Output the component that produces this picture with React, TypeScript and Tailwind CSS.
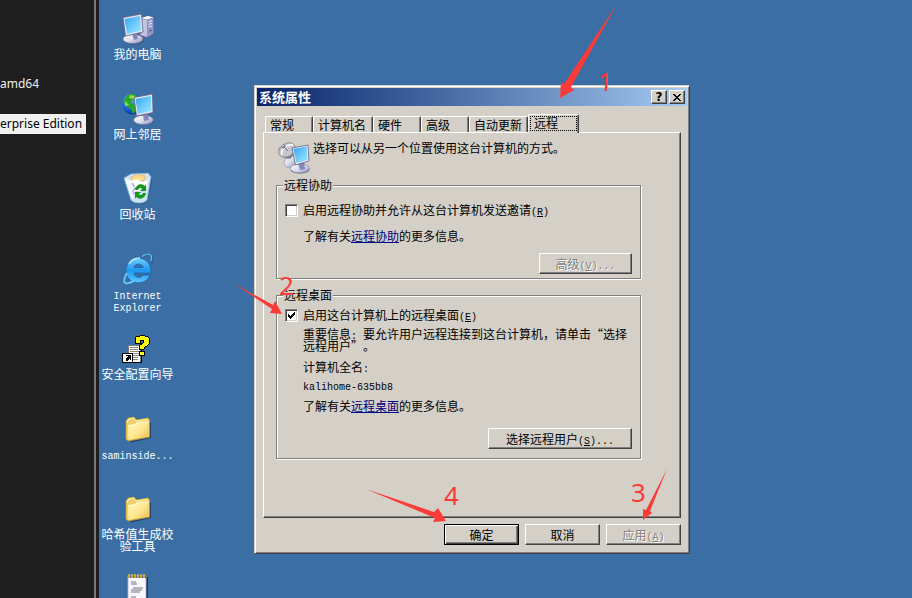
import { useState, type ReactNode } from "react";

const EDGE = "border border-t-white border-l-white border-r-[#404040] border-b-[#404040] shadow-[inset_-1px_-1px_0_#808080]";
const DISABLED = "disabled:text-[#808080] disabled:[text-shadow:1px_1px_0_#fff]";

const TABS = [
  { label: "常规", width: "w-12" },
  { label: "计算机名", width: "w-[60px]" },
  { label: "硬件", width: "w-12" },
  { label: "高级", width: "w-12" },
  { label: "自动更新", width: "w-[59px]" },
  { label: "远程", width: "w-[51px]" },
];

function Mono({ children }: { children: ReactNode }) {
  return <span className="whitespace-pre font-['Liberation_Mono',monospace] text-[10px] leading-[6px]">{children}</span>;
}

function Key({ letter }: { letter: string }) {
  return (
    <Mono>
      (<u>{letter}</u>)
    </Mono>
  );
}

function ScreenGradients() {
  return (
    <svg className="absolute size-0" aria-hidden="true">
      <defs>
        <linearGradient id="glass" x1="0" y1="0" x2="1" y2="1">
          <stop offset="0" stopColor="#2fa4f4" />
          <stop offset="0.5" stopColor="#6cc9fb" />
          <stop offset="1" stopColor="#9fe6ff" />
        </linearGradient>
        <linearGradient id="metal" x1="0" y1="0" x2="1" y2="1">
          <stop offset="0" stopColor="#ffffff" />
          <stop offset="0.5" stopColor="#dcdcea" />
          <stop offset="1" stopColor="#8484b4" />
        </linearGradient>
        <linearGradient id="paper" x1="0" y1="0" x2="1" y2="1">
          <stop offset="0" stopColor="#fff8c0" />
          <stop offset="0.5" stopColor="#ffe893" />
          <stop offset="1" stopColor="#e9bd4c" />
        </linearGradient>
        <radialGradient id="earth" cx="0.35" cy="0.3" r="0.75">
          <stop offset="0" stopColor="#7cc4ff" />
          <stop offset="0.5" stopColor="#1d6fdc" />
          <stop offset="1" stopColor="#06308c" />
        </radialGradient>
        <linearGradient id="explorer" x1="0" y1="0" x2="0" y2="1">
          <stop offset="0" stopColor="#6fd0ff" />
          <stop offset="0.5" stopColor="#1e97ee" />
          <stop offset="1" stopColor="#5cc8ff" />
        </linearGradient>
      </defs>
    </svg>
  );
}

function ComputerIcon() {
  return (
    <svg viewBox="0 0 32 32" className="size-8" aria-hidden="true">
      <path d="M18 5 26 2.5 32 4v17l-7 4-8-3z" fill="#8181b8" stroke="#55558a" strokeWidth=".6" />
      <path d="m19 5 7-2 5.500 1.500-6 2z" fill="#fafaff" />
      <path d="M19 6l6 1v17l-6-2z" fill="#c4c4df" />
      <path d="m25.500 7 5.500-2v15.500L25.500 24z" fill="#9595c9" />
      <path d="m26.500 9 3.500-1.200M26.500 11.500l3.500-1.200M26.500 14l3.500-1.200" stroke="#ededff" strokeWidth="1" />
      <circle cx="28.500" cy="17.500" r="1" fill="#4d4d80" />
      <ellipse cx="12" cy="27" rx="10" ry="4.500" fill="#363653" opacity=".6" />
      <ellipse cx="11" cy="26" rx="10" ry="4.600" fill="url(#metal)" stroke="#7878a5" strokeWidth=".6" />
      <path d="m10 21 5-1 1 6-4 1z" fill="#8585bd" />
      <path d="M1 4.500 19.500 1 21 19 3.500 23z" fill="#e7e7f2" stroke="#636382" strokeWidth=".8" />
      <path d="M2.500 6 18 3l1.200 14.500L5 21z" fill="url(#glass)" />
    </svg>
  );
}

function NetworkIcon() {
  return (
    <svg viewBox="0 0 32 32" className="size-8" aria-hidden="true">
      <circle cx="10.500" cy="11" r="10.500" fill="url(#earth)" />
      <path d="M5 3c4-3 8-2 10 0l-3 4-3 1 1 3 4 1 1 4-4 5-2-5-4-2-4-6z" fill="#2ba52c" />
      <path d="m8 2 5 1-2 3-4-1zM3 8l4 4-4 1z" fill="#93de43" />
      <ellipse cx="22" cy="28.500" rx="9.500" ry="3.500" fill="#363653" opacity=".55" />
      <ellipse cx="21.500" cy="27" rx="9.800" ry="4.600" fill="url(#metal)" stroke="#7878a5" strokeWidth=".6" />
      <path d="m21 22 5-1 1 6-5 1z" fill="#8585bd" />
      <path d="M12 4.500 30.500 1 31 19.500 14.500 23z" fill="#e7e7f2" stroke="#636382" strokeWidth=".8" />
      <path d="M13.500 6 29 3l.500 15L15.800 21z" fill="url(#glass)" />
    </svg>
  );
}

function RecycleIcon() {
  return (
    <svg viewBox="0 0 32 32" className="size-8" aria-hidden="true">
      <path d="M9 28c4 4 13 3 16-2l4-21 1 2-4 20c-3 5-12 6-17 1z" fill="#23415f" opacity=".6" />
      <path d="m2 5 7-4 17-1 3 4-4 23c-3 4-13 4-16 0z" fill="#cfe3f4" stroke="#8fb4d4" strokeWidth=".8" />
      <path d="m9 4 8-3 2 2 3-2 1 6-13 4z" fill="#ffd98b" stroke="#e6aa4c" strokeWidth=".6" />
      <path d="m8 8 7-2 5 3 6-2-2 10-13 2z" fill="#fff" />
      <path d="m10 10 3 5-4 6 6-2 2 5" fill="none" stroke="#b5b4dc" strokeWidth="1.500" />
      <path d="m3 6 5 1 4 19-3-1z" fill="#f7fcff" opacity=".9" />
      <path d="M13 17c1-6 7-7 9.500-4L24 11.500v6.500h-6l2.200-2.200c-1.700-1.500-3.700-.8-4.200 1.200z" fill="#12991b" />
      <path d="M24 20c-1 6-7 7-9.500 4L13 25.500V19h6l-2.200 2.200c1.700 1.500 3.700.8 4.200-1.200z" fill="#12991b" />
    </svg>
  );
}

function ExplorerIcon() {
  return (
    <svg viewBox="0 0 32 32" className="size-8" aria-hidden="true">
      <path
        d="M29 20H12c.5 5 7 5.500 9 2h7C24 33.500 4 32.500 4 17.500 4 1 30 .5 29 20zM12 14.500h9c-.5-4.500-8.500-4.500-9 0z"
        fill="url(#explorer)"
        fillRule="evenodd"
        stroke="#1764aa"
        strokeWidth=".8"
      />
      <path d="M7 11c2-4 6-6 11-6" fill="none" stroke="#b6eaff" strokeWidth="1.500" />
      <path d="M20 4c6-4 13-4 9.500 6" fill="none" stroke="#24639e" strokeWidth="2" />
      <path d="M20 3.500c5-3.500 11.500-4 9 4.500" fill="none" stroke="#65c5f8" strokeWidth="1.200" />
      <path d="M5 20C-1 31 3 32.500 12 28" fill="none" stroke="#65c5f8" strokeWidth="2" />
    </svg>
  );
}

function WizardIcon() {
  return (
    <svg viewBox="0 0 32 32" className="size-8" aria-hidden="true" shapeRendering="crispEdges">
      <path d="M6 12h12v17H6z" fill="#fff" stroke="#808080" />
      <path d="M19 12v17M8 29h12" stroke="#000" fill="none" />
      <path d="M8 14h8M8 16h8M8 18h9M8 20h9M8 22h9M11 24h5M11 26h5" stroke="#888" />
      <path
        d="M13 9V5l2-2h3l1-1h3l1 1h2l2 2v6l-2 2-2 1-1 2h-5v-3l4-3V7h-3v3h-5z"
        fill="#ff0"
        stroke="#000"
      />
      <path d="M17 18h5v4h-5z" fill="#ff0" stroke="#000" />
      <path d="M.5 20.500h10v9H.5z" fill="#fff" stroke="#000" />
      <path d="M4 22h5v5H8v-1H7v1H6v1H4v-3h1v-1h1v-1H4z" fill="#000" />
    </svg>
  );
}

function FolderIcon() {
  return (
    <svg viewBox="0 0 32 32" className="size-8" aria-hidden="true">
      <path d="m8 28 20-4V9l1 1v15L9 29.500z" fill="#1d3450" opacity=".7" />
      <path d="m4 8 2-3 6-1 2 3 12-2 1.500 2v17L6 28l-2-2z" fill="#f0cf6a" stroke="#bc942d" strokeWidth=".8" />
      <path d="m5 9 2-3 5-1 2 3 12-2" fill="none" stroke="#fff5af" />
      <path d="m6 12 7-1 1-2 13-1-2 15.500L6.500 27z" fill="url(#paper)" />
      <path d="m7 13 7-1 1-2 11-1" fill="none" stroke="#fffbd2" />
    </svg>
  );
}

function NotepadIcon() {
  return (
    <svg viewBox="0 0 32 32" className="size-8" aria-hidden="true">
      <path d="M8 4h18v27H8z" fill="#1d3450" />
      <path d="M6 3h18v28H6z" fill="#f7f7ff" stroke="#b3b3d2" strokeWidth=".8" />
      <path d="M6 3h18v2H6z" fill="#656580" />
      <path d="M7 1v4M10 1v4M13 1v4M16 1v4M19 1v4M22 1v4" stroke="#e4bb39" strokeWidth="1.500" />
      <path d="M9 9h5M9 11h6M11 15h10M9 17h11M9 19h9M9 24h5M9 27h11" stroke="#666" strokeWidth=".9" />
    </svg>
  );
}

function RemoteIcon() {
  return (
    <svg viewBox="0 0 32 32" className="size-8 shrink-0" aria-hidden="true">
      <path d="m8 14 7-1 4 9c-2 5-11 5-13 0z" fill="url(#metal)" stroke="#8989a5" strokeWidth=".6" />
      <path d="M1 6c0 7 6 12 12 10l3-5z" fill="#85859a" stroke="#6f6f80" strokeWidth=".6" />
      <ellipse cx="9" cy="8" rx="9" ry="6.500" transform="rotate(-32 9 8)" fill="#c6c6cc" stroke="#7b7b88" strokeWidth=".7" />
      <path d="M4 13c-2-5 5-11 11-10" fill="none" stroke="#fff" strokeWidth="1.500" />
      <path d="m6 5 4 4" fill="none" stroke="#6a6a7c" />
      <circle cx="5.500" cy="4.500" r="2" fill="#777788" />
      <circle cx="5" cy="4" r=".8" fill="#fff" />
      <ellipse cx="22" cy="28" rx="9.500" ry="3.500" fill="#33334d" opacity=".6" />
      <ellipse cx="22" cy="26.500" rx="9.500" ry="4.500" fill="url(#metal)" stroke="#7878a5" strokeWidth=".6" />
      <path d="m20 21 6-1 1 7-5 1z" fill="#8585bd" />
      <path d="m14 6 16-3 1 16-13.500 4z" fill="#e7e7f2" stroke="#636382" strokeWidth=".8" />
      <path d="m15.500 7 13-2.500 1 13.500-11 3z" fill="url(#glass)" />
    </svg>
  );
}

const SHORTCUTS: { id: string; icon: ReactNode; label: ReactNode }[] = [
  { id: "computer", icon: <ComputerIcon />, label: "我的电脑" },
  { id: "network", icon: <NetworkIcon />, label: "网上邻居" },
  { id: "recycle", icon: <RecycleIcon />, label: "回收站" },
  { id: "explorer", icon: <ExplorerIcon />, label: <Mono>{"Internet\nExplorer"}</Mono> },
  { id: "wizard", icon: <WizardIcon />, label: "安全配置向导" },
  { id: "saminside", icon: <FolderIcon />, label: <Mono>saminside...</Mono> },
  { id: "hash", icon: <FolderIcon />, label: "哈希值生成校验工具" },
  { id: "notes", icon: <NotepadIcon />, label: "" },
];

function CheckOption({ letter, checked, children }: { letter: string; checked?: boolean; children: ReactNode }) {
  return (
    <label className="flex h-[13px] items-start gap-[5px]">
      <span className="relative size-[13px] shrink-0">
        <input
          type="checkbox"
          defaultChecked={checked}
          className="peer block size-[13px] appearance-none border border-t-[#808080] border-l-[#808080] border-r-white border-b-white bg-white shadow-[inset_1px_1px_0_#404040,inset_-1px_-1px_0_#d4d0c8]"
        />
        <svg
          viewBox="0 0 13 13"
          shapeRendering="crispEdges"
          className="pointer-events-none absolute inset-0 hidden peer-checked:block"
          aria-hidden="true"
        >
          <path d="M3 5h1v1h1v1h1V6h1V5h1V4h1V3h1v3H9v1H8v1H7v1H6v1H5V9H4V8H3z" />
        </svg>
      </span>
      <span>
        {children}
        <Key letter={letter} />
      </span>
    </label>
  );
}

function Group({ title, className, children }: { title: string; className: string; children: ReactNode }) {
  return (
    <fieldset
      className={`flex flex-col border border-[#808080] pr-2 pl-2 shadow-[1px_1px_0_#fff,inset_1px_1px_0_#fff] ${className}`}
    >
      <legend className="-ml-0.5 bg-[#d4d0c8] px-px">{title}</legend>
      {children}
    </fieldset>
  );
}

function SystemProperties() {
  const [active, setActive] = useState("远程");

  return (
    <section
      role="dialog"
      aria-label="系统属性"
      className="absolute top-[85px] left-[155px] w-[436px] border border-t-[#d4d0c8] border-l-[#d4d0c8] border-r-[#404040] border-b-[#404040] bg-[#d4d0c8] p-0.5 shadow-[inset_1px_1px_0_#fff,inset_-1px_-1px_0_#808080]"
    >
      <header className="flex h-[18px] items-center gap-0.5 bg-linear-to-r from-[#0a246a] to-[#a6caf0] px-0.5">
        <h1 className="flex-1 text-[13px] font-bold text-white">系统属性</h1>
        <button
          type="button"
          aria-label="帮助"
          className={`h-3.5 w-4 bg-[#d4d0c8] font-['DejaVu_Sans',sans-serif] text-[12px] leading-3 font-bold ${EDGE}`}
        >
          ?
        </button>
        <button type="button" aria-label="关闭" className={`flex h-3.5 w-4 items-center justify-center bg-[#d4d0c8] ${EDGE}`}>
          <svg viewBox="0 0 8 7" className="h-[7px] w-2" shapeRendering="crispEdges" aria-hidden="true">
            <path d="M0 0h2v1h1v1h2V1h1V0h2v1H7v1H6v1H5v1h1v1h1v1h1v1H6V6H5V5H3v1H2v1H0V6h1V5h1V4h1V3H2V2H1V1H0z" />
          </svg>
        </button>
      </header>

      <div className="px-1.5 pt-2 pb-1.5">
        <div role="tablist" className="relative z-10 -mb-px flex items-end pl-0.5">
          {TABS.map(({ label, width }) => {
            const selected = label === active;
            return (
              <button
                key={label}
                type="button"
                role="tab"
                aria-selected={selected}
                onClick={() => setActive(label)}
                className={`rounded-t-[2px] border border-b-0 border-t-white border-l-white border-r-[#404040] bg-[#d4d0c8] text-left shadow-[inset_-1px_0_0_#808080] ${width} ${
                  selected ? "h-[19px] p-px pb-0.5" : "mb-px h-4 pl-1"
                }`}
              >
                <span className={selected ? "block h-[15px] border border-dotted border-black pl-[3px]" : "block whitespace-nowrap"}>
                  {label}
                </span>
              </button>
            );
          })}
        </div>

        <div
          role="tabpanel"
          className="border border-t-white border-l-white border-r-[#404040] border-b-[#404040] pt-[9px] pr-[39px] pb-[58px] pl-3 shadow-[inset_-1px_-1px_0_#808080]"
        >
          <div className="flex gap-[3px] pl-0.5">
            <RemoteIcon />
            <p>选择可以从另一个位置使用这台计算机的方式。</p>
          </div>

          <Group title="远程协助" className="mt-[5px] pt-[13px] pb-1">
            <CheckOption letter="R">启用远程协助并允许从这台计算机发送邀请</CheckOption>
            <p className="mt-[13px] pl-[18px]">
              了解有关
              <a href="#assist" className="text-[#000080] underline">
                远程协助
              </a>
              的更多信息。
            </p>
            <button type="button" disabled className={`mt-[11px] h-[21px] w-[93px] self-end ${EDGE} ${DISABLED}`}>
              高级
              <Mono>
                (<u>V</u>)...
              </Mono>
            </button>
          </Group>

          <Group title="远程桌面" className="mt-2.5 pt-2 pb-[9px]">
            <CheckOption letter="E" checked>
              启用这台计算机上的远程桌面
            </CheckOption>
            <div className="pl-[18px]">
              <p className="mt-1.5 whitespace-nowrap">
                重要信息<Mono>: </Mono>要允许用户远程连接到这台计算机，请单击“选择
                <br />
                远程用户”。
              </p>
              <p className="mt-[9px]">
                计算机全名<Mono>:</Mono>
              </p>
              <p className="mt-1.5">
                <Mono>kalihome-635bb8</Mono>
              </p>
              <p className="mt-[9px]">
                了解有关
                <a href="#desktop" className="text-[#000080] underline">
                  远程桌面
                </a>
                的更多信息。
              </p>
            </div>
            <button type="button" className={`mt-4 h-[21px] w-36 self-end ${EDGE}`}>
              选择远程用户
              <Mono>
                (<u>S</u>)...
              </Mono>
            </button>
          </Group>
        </div>

        <footer className="mt-1.5 flex justify-end gap-1.5">
          <button
            type="button"
            className="h-[21px] w-[75px] border border-black shadow-[inset_1px_1px_0_#fff,inset_-1px_-1px_0_#404040,inset_-2px_-2px_0_#808080]"
          >
            确定
          </button>
          <button type="button" className={`h-[21px] w-[75px] ${EDGE}`}>
            取消
          </button>
          <button type="button" disabled className={`h-[21px] w-[75px] ${EDGE} ${DISABLED}`}>
            应用
            <Key letter="A" />
          </button>
        </footer>
      </div>
    </section>
  );
}

// Step numbers and arrows drawn over the remote session
function Annotations() {
  return (
    <svg
      width="912"
      height="598"
      viewBox="0 0 912 598"
      className="pointer-events-none absolute top-0 left-0 fill-[#fb3b37] font-['Noto_Sans',sans-serif] text-[26px]"
    >
      <path d="M617 4 571 87l3 3-14 8 1-16 3 2z" />
      <path d="m233 283 40 22 2-4 7 13-12-1 2-4z" />
      <path d="m667 469-17 42 2 2-9 7v-11l3 1z" />
      <path d="m366 489 68 23 4-4 8 13-13 1 2-4z" />
      <text x="598" y="91">1</text>
      <text x="279" y="295">2</text>
      <text x="631" y="502">3</text>
      <text x="444" y="505">4</text>
    </svg>
  );
}

export default function App() {
  return (
    <div
      lang="zh-CN"
      className="relative flex h-screen min-h-80 overflow-hidden bg-[#1e1e1e] font-['Noto_Sans_CJK_SC',sans-serif] text-[12px] leading-3 text-black [text-spacing-trim:space-all]"
    >
      <ScreenGradients />
      <aside className="w-24 shrink-0 border-r-2 border-[#777a7d] pt-[74px] font-['Noto_Sans',sans-serif] text-[12px] leading-5 whitespace-nowrap">
        <p className="text-[#f0f0f0]">amd64</p>
        <p className="mt-5 w-[86px] bg-[#f0f0f0]">erprise Edition</p>
      </aside>
      <main className="relative ml-[3px] flex-1 bg-[#3a6ea5]">
        <ul className="flex w-[77px] flex-col pt-[13px]">
          {SHORTCUTS.map(({ id, icon, label }) => (
            <li key={id} className="flex h-20 flex-col items-center gap-[3px] text-center text-white">
              {icon}
              <span className="w-[72px]">{label}</span>
            </li>
          ))}
        </ul>
        <SystemProperties />
      </main>
      <Annotations />
    </div>
  );
}
